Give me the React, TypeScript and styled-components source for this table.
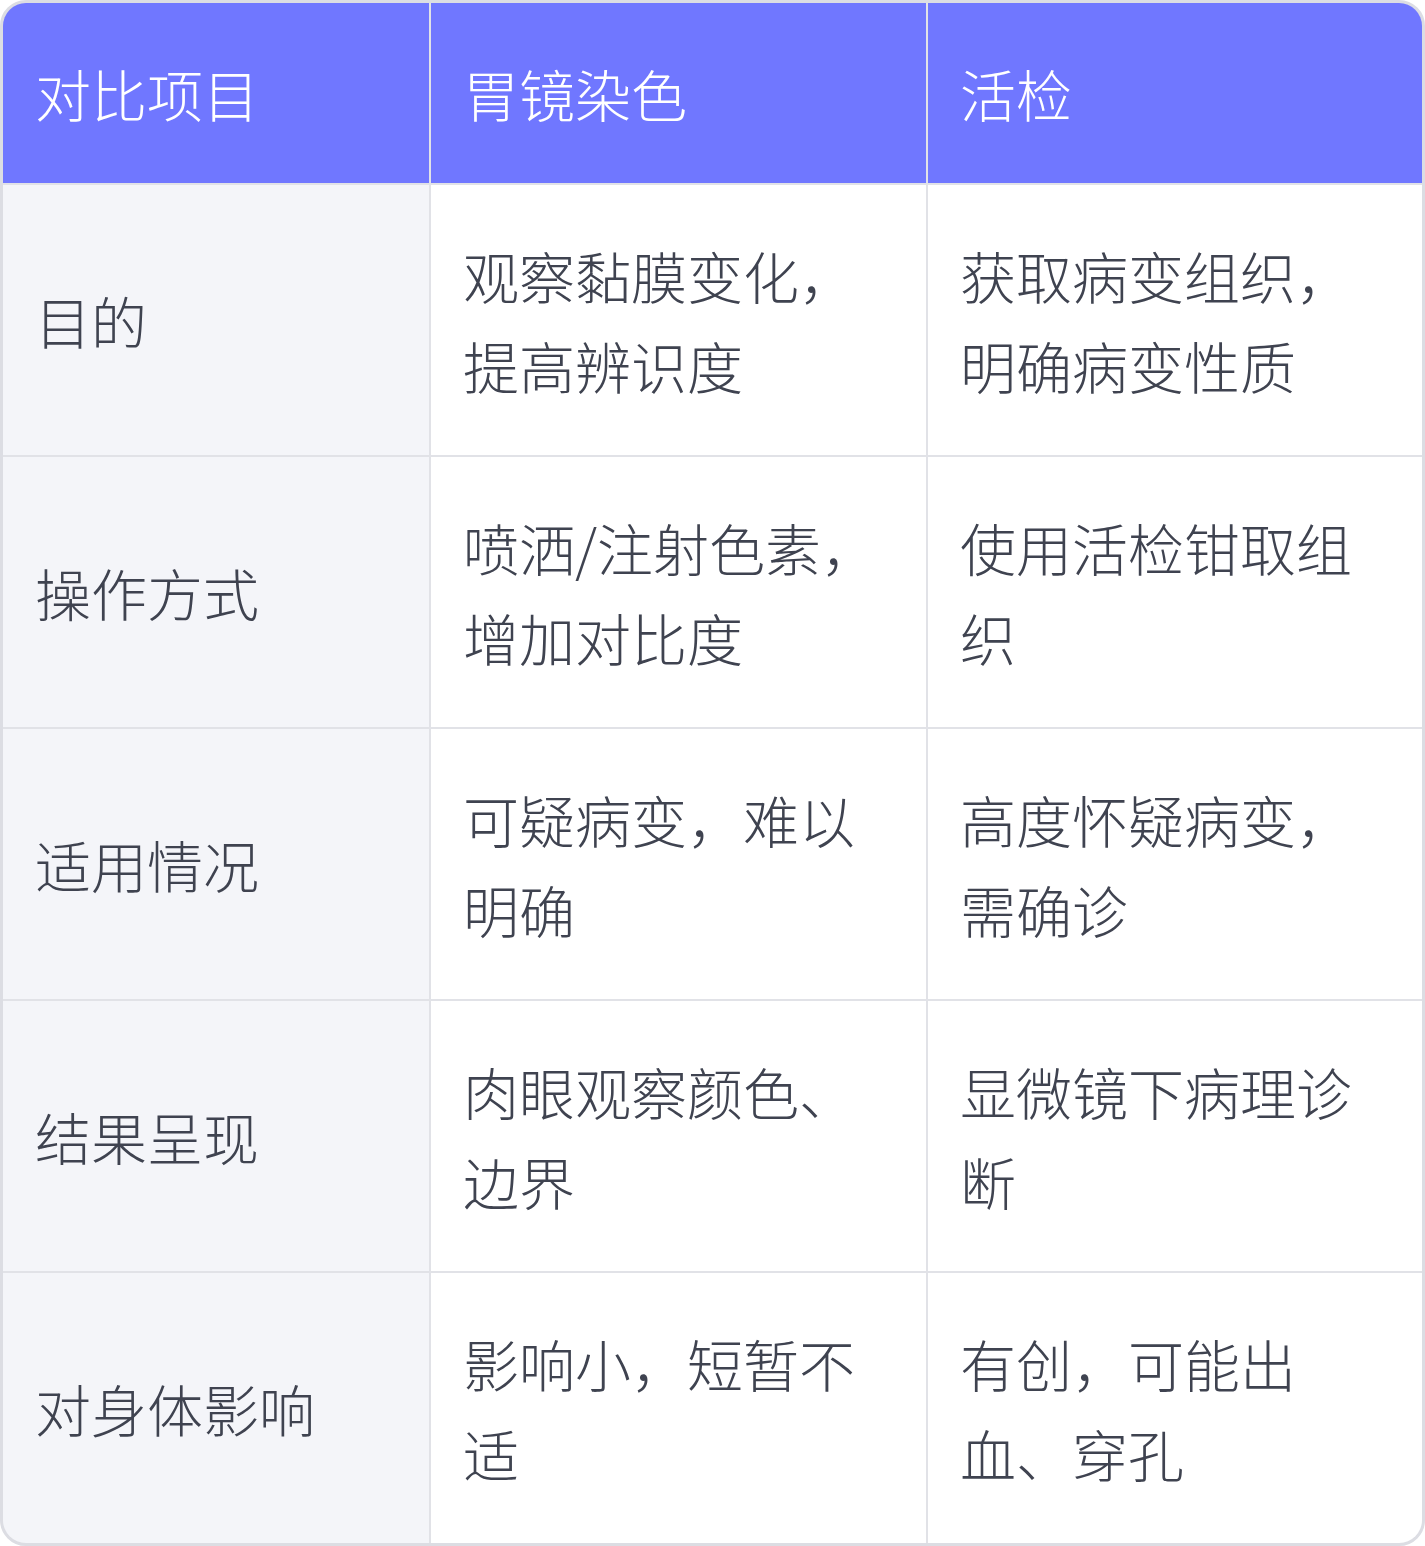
import styled, { createGlobalStyle } from "styled-components";

const GlobalStyle = createGlobalStyle`
  body {
    margin: 0;
    background: #ffffff;
    font-family: "Noto Sans CJK SC", "Noto Sans", sans-serif;
  }
`;

const Table = styled.div`
  display: grid;
  grid-template-columns: 426px 495px 1fr;
  gap: 2px;
  width: 1425px;
  box-sizing: border-box;
  border: 3px solid #dcdde3;
  border-radius: 26px;
  overflow: hidden;
  background: #e1e2e7;
`;

const HeadCell = styled.div`
  display: flex;
  align-items: center;
  padding: 45px 34px 45px 32px;
  background: #7077ff;
  color: #ffffff;
  font-size: 56px;
  font-weight: 300;
  line-height: 90px;
`;

const Cell = styled.div<{ $label?: boolean }>`
  display: flex;
  align-items: center;
  padding: 45px 34px 45px 32px;
  background: ${(p) => (p.$label ? "#f4f5f9" : "#ffffff")};
  color: #3f4350;
  font-size: 56px;
  font-weight: 300;
  line-height: 90px;
`;

const headers = ["对比项目", "胃镜染色", "活检"];

const rows = [
  ["目的", "观察黏膜变化，提高辨识度", "获取病变组织，明确病变性质"],
  ["操作方式", "喷洒/注射色素，增加对比度", "使用活检钳取组织"],
  ["适用情况", "可疑病变，难以明确", "高度怀疑病变，需确诊"],
  ["结果呈现", "肉眼观察颜色、边界", "显微镜下病理诊断"],
  ["对身体影响", "影响小，短暂不适", "有创，可能出血、穿孔"],
];

export default function App() {
  return (
    <>
      <GlobalStyle />
      <Table>
        {headers.map((h) => (
          <HeadCell key={h}>{h}</HeadCell>
        ))}
        {rows.map((row) =>
          row.map((text, i) => (
            <Cell key={row[0] + i} $label={i === 0}>
              <span>{text}</span>
            </Cell>
          ))
        )}
      </Table>
    </>
  );
}
